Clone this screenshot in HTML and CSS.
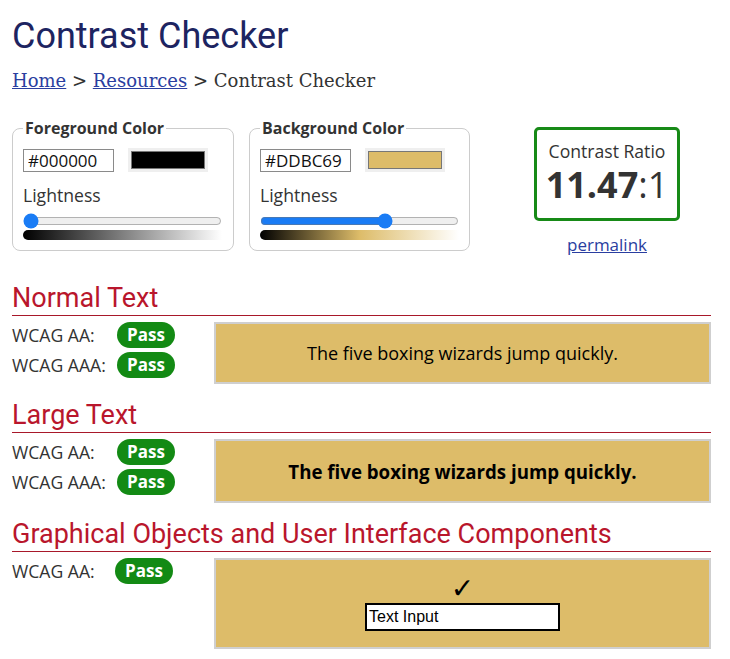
FILE: index.html
```html
<!DOCTYPE html>
<html lang="en">
<head>
<meta charset="utf-8">
<title>Contrast Checker</title>
<link rel="stylesheet" href="styles.css">
</head>
<body>
<main class="page">
  <h1 class="title">Contrast Checker</h1>
  <nav class="crumbs"><a href="#">Home</a> &gt; <a href="#">Resources</a> &gt; Contrast Checker</nav>

  <div class="top">
    <fieldset class="picker">
      <legend>Foreground Color</legend>
      <div class="inputs">
        <input class="hex" type="text" value="#000000">
        <span class="swatch"><span class="swatch-in swatch-fg"></span></span>
      </div>
      <div class="light-label">Lightness</div>
      <input class="range" type="range" min="0" max="100" value="0">
      <div class="grad grad-fg"></div>
    </fieldset>

    <fieldset class="picker">
      <legend>Background Color</legend>
      <div class="inputs">
        <input class="hex" type="text" value="#DDBC69">
        <span class="swatch"><span class="swatch-in swatch-bg"></span></span>
      </div>
      <div class="light-label">Lightness</div>
      <input class="range" type="range" min="0" max="100" value="64">
      <div class="grad grad-bg"></div>
    </fieldset>

    <div class="result">
      <div class="ratio-box">
        <div class="ratio-label">Contrast Ratio</div>
        <div class="ratio-value"><b>11.47</b>:1</div>
      </div>
      <a class="permalink" href="#">permalink</a>
    </div>
  </div>

  <section class="sec">
    <h2 class="sec-title">Normal Text</h2>
    <div class="sec-body">
      <div class="checks">
        <div class="check"><span class="lbl">WCAG AA:</span><span class="pass">Pass</span></div>
        <div class="check"><span class="lbl">WCAG AAA:</span><span class="pass">Pass</span></div>
      </div>
      <div class="sample sample-normal">The five boxing wizards jump quickly.</div>
    </div>
  </section>

  <section class="sec">
    <h2 class="sec-title">Large Text</h2>
    <div class="sec-body">
      <div class="checks">
        <div class="check"><span class="lbl">WCAG AA:</span><span class="pass">Pass</span></div>
        <div class="check"><span class="lbl">WCAG AAA:</span><span class="pass">Pass</span></div>
      </div>
      <div class="sample sample-large">The five boxing wizards jump quickly.</div>
    </div>
  </section>

  <section class="sec">
    <h2 class="sec-title">Graphical Objects and User Interface Components</h2>
    <div class="sec-body">
      <div class="checks">
        <div class="check"><span class="lbl lbl-narrow">WCAG AA:</span><span class="pass">Pass</span></div>
      </div>
      <div class="sample sample-ui">
        <span class="tick">&#10003;</span>
        <span class="fake-input">Text Input</span>
      </div>
    </div>
  </section>
</main>
</body>
</html>
```

FILE: styles.css
```css
* { box-sizing: border-box; }

body {
  margin: 0;
  background: #fff;
  font-family: "Open Sans", sans-serif;
  color: #333;
}

.page {
  padding: 0 19px 0 12px;
}

.title {
  margin: 0;
  padding-top: 14px;
  font-family: Roboto, sans-serif;
  font-weight: 400;
  font-size: 36px;
  line-height: 44px;
  color: #1d2461;
}

.crumbs {
  margin-top: 12px;
  font-family: "DejaVu Serif", serif;
  font-size: 18px;
  line-height: 22px;
  color: #333;
}
.crumbs a { color: #2a3ea0; }

.top {
  display: flex;
  align-items: flex-start;
  margin-top: 26px;
}

.picker {
  margin: 0;
  width: 222px;
  padding: 10px 10px 10px 10px;
  border: 1px solid #ccc;
  border-radius: 8px;
}
.picker + .picker { margin-left: 15px; width: 221px; }

.picker legend {
  padding: 0 2px;
  font-weight: 700;
  font-size: 16px;
  line-height: 20px;
  color: #333;
}

.inputs {
  display: flex;
  align-items: center;
  gap: 14px;
}

.hex {
  width: 91px;
  height: 23px;
  padding: 0 4px;
  border: 1px solid #8a8a8a;
  font-family: "Open Sans", sans-serif;
  font-size: 17px;
  color: #111;
  margin: 0;
}

.swatch {
  display: block;
  width: 80px;
  height: 24px;
  padding: 3px;
  background: #efefef;
}
.swatch-in {
  display: block;
  height: 100%;
  border: 1px solid #777;
}
.swatch-fg { background: #000; }
.swatch-bg { background: #DDBC69; }

.light-label {
  margin-top: 11px;
  font-size: 17.6px;
  line-height: 24px;
  color: #333;
}

.range {
  display: block;
  width: 199px;
  margin: 6px 0 0 0;
  height: 16px;
  accent-color: #1a7cf5;
}

.grad {
  margin-top: 1px;
  width: 199px;
  height: 10px;
  border-radius: 5px 0 0 5px;
}
.grad-fg { background: linear-gradient(to right, #000, #fff); }
.grad-bg { background: linear-gradient(to right, #000, #DDBC69 50%, #fff); }

.result {
  margin-left: 64px;
  display: flex;
  flex-direction: column;
  align-items: center;
  width: 146px;
}

.ratio-box {
  margin-top: 9px;
  width: 146px;
  height: 94px;
  border: 3px solid #178a17;
  border-radius: 5px;
  text-align: center;
  padding-top: 9px;
}
.ratio-label {
  font-size: 17.6px;
  line-height: 24px;
  color: #333;
}
.ratio-value {
  font-size: 36px;
  line-height: 44px;
  color: #333;
}
.ratio-value b { font-weight: 700; }

.permalink {
  margin-top: 12px;
  font-size: 17px;
  line-height: 24px;
  color: #2a3ea0;
}

.sec { margin-top: 25px; }
.sec + .sec { margin-top: 15px; }

.sec-title {
  margin: 0;
  font-family: Roboto, sans-serif;
  font-weight: 400;
  font-size: 27px;
  line-height: 33px;
  color: #b9162c;
  border-bottom: 1px solid #a8182a;
}

.sec-body {
  display: flex;
  align-items: flex-start;
  margin-top: 6px;
}

.checks {
  width: 202px;
  display: flex;
  flex-direction: column;
  gap: 4px;
}

.check {
  display: flex;
  align-items: center;
  height: 26px;
}

.lbl {
  width: 105px;
  font-size: 17.6px;
  color: #333;
}
.lbl-narrow { width: 103px; }

.pass {
  display: inline-block;
  width: 58px;
  height: 26px;
  line-height: 26px;
  border-radius: 13px;
  background: #138a14;
  color: #fff;
  font-weight: 700;
  font-size: 17px;
  text-align: center;
}

.sample {
  flex: 1;
  background: #DDBC69;
  border: 2px solid #cfcfcf;
  color: #000;
  display: flex;
  align-items: center;
  justify-content: center;
}

.sample-normal {
  height: 62px;
  font-size: 18px;
}
.sample-large {
  height: 64px;
  font-size: 18.7px;
  font-weight: 700;
}
.sample-ui {
  height: 91px;
  flex-direction: column;
  justify-content: flex-start;
  padding-top: 16px;
}

.tick {
  font-family: "DejaVu Sans", sans-serif;
  font-size: 28px;
  line-height: 26px;
  color: #000;
}
.fake-input {
  display: block;
  width: 195px;
  height: 28px;
  margin-top: 1px;
  border: 2px solid #000;
  background: #fff;
  font-family: "Liberation Sans", Arial, sans-serif;
  font-size: 16px;
  line-height: 24px;
  padding-left: 2px;
  color: #000;
}
```
